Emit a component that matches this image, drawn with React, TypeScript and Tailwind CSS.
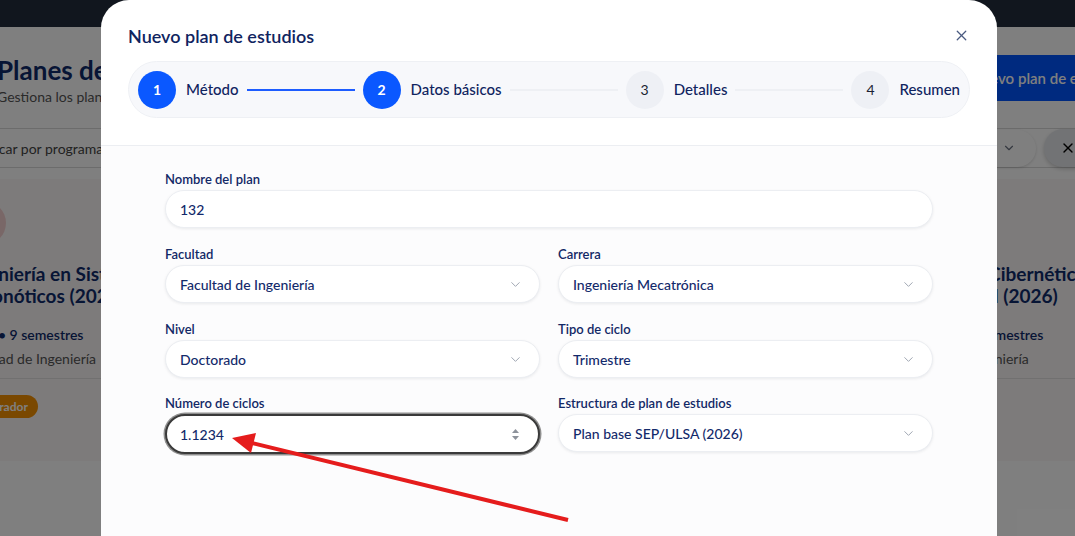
import React from "react";
import { ChevronDown, X } from "lucide-react";

const font = { fontFamily: "Lato, 'Noto Sans', sans-serif" };

function Field({ label, value, select, focused }: { label: string; value: string; select?: boolean; focused?: boolean }) {
  return (
    <div className="flex flex-col">
      <div className="h-[18px] text-[13px] font-semibold leading-[18px] text-[#122866]">{label}</div>
      <div
        className={
          focused
            ? "mt-[2px] flex h-[40px] items-center justify-between rounded-full border-2 border-[#3a3a3a] bg-white pl-[13px] pr-[18px] shadow-[0_0_0_1.5px_#8f8f8f]"
            : "mt-[2px] flex h-[38px] items-center justify-between rounded-full border border-[#eceef2] bg-white pl-[14px] pr-[16px] shadow-[0_1px_3px_rgba(15,23,42,0.08)]"
        }
      >
        <span className="text-[14px] font-medium text-[#132a6b]">{value}</span>
        {select && <ChevronDown size={15} strokeWidth={1.5} className="text-[#9aa1ad]" />}
        {focused && (
          <svg width="9" height="13" viewBox="0 0 9 13">
            <path d="M4.5 1 L8 5 L1 5 Z" fill="#8d929b" />
            <path d="M4.5 12 L8 8 L1 8 Z" fill="#8d929b" />
          </svg>
        )}
      </div>
    </div>
  );
}

function Step({ n, label, active }: { n: number; label: string; active?: boolean }) {
  return (
    <div className="flex shrink-0 items-center gap-[10px]">
      <div
        className={
          active
            ? "flex h-[38px] w-[38px] items-center justify-center rounded-full bg-[#0a58ff] text-[14px] font-bold text-white"
            : "flex h-[38px] w-[38px] items-center justify-center rounded-full bg-[#eef0f5] text-[14px] text-[#1b1f33]"
        }
      >
        {n}
      </div>
      <span className="text-[15px] font-medium text-[#10245f]">{label}</span>
    </div>
  );
}

function Line({ active }: { active?: boolean }) {
  return <div className={active ? "mx-2 h-[2px] flex-1 bg-[#1d5cff]" : "mx-2 h-[2px] flex-1 bg-[#eef0f4]"} />;
}

function BgCard({ lines, badge }: { lines: string[]; badge?: string }) {
  return (
    <div className="h-[282px] rounded-[16px] bg-[#fbf7f7] px-6 pt-[22px]">
      <div className="h-[44px] w-[44px] rounded-full bg-[#f3cfcf]" />
      <div className="mt-[18px] text-[19px] font-bold leading-[22px] text-[#0f2a6b]">
        <div>{lines[0]}</div>
        <div>{lines[1]}</div>
      </div>
      <div className="mt-[18px] text-[14px] font-semibold leading-[20px] text-[#0f2a6b]">{lines[2]}</div>
      <div className="mt-[4px] text-[14px] leading-[20px] text-[#555]">{lines[3]}</div>
      <div className="mt-[9px] h-px bg-[#e3e0e0]" />
      {badge && (
        <div className="mt-[16px] flex pl-[8px]">
          <div className="flex h-[23px] items-center rounded-full bg-[#f59000] pl-[10px] pr-[10px] text-[12px] font-bold text-white">
            {badge}
          </div>
        </div>
      )}
    </div>
  );
}

export default function App() {
  return (
    <div className="relative h-[536px] w-[1075px] overflow-hidden bg-white" style={font}>
      {/* background page */}
      <div className="h-[27px] bg-[#222c3c]" />
      <div className="ml-[-64px] w-[1260px]">
        <div className="flex items-start justify-between pr-[44px] pt-[28px]">
          <div className="ml-[61px]">
            <div className="text-[26px] font-bold leading-[30px] text-[#0f2a6b]">Planes de estudio</div>
            <div className="mt-[1px] text-[14px] text-[#555]">Gestiona los planes de estudio</div>
          </div>
          <div className="flex h-[46px] w-[210px] items-center rounded-[10px] bg-[#0054ff] px-4 text-[15px] font-semibold text-white">
            + Nuevo plan de estudios
          </div>
        </div>
        <div className="mt-[21px] flex items-center gap-2 border-y border-[#d8d8d8]">
          <div className="flex h-[38px] w-[900px] items-center pl-[40px] text-[14px] text-[#444]">Buscar por programa...</div>
          <div className="ml-[92px] flex h-[37px] w-[100px] items-center justify-end rounded-full bg-white pr-[20px] shadow-[0_1px_3px_rgba(0,0,0,0.15)]">
            <ChevronDown size={14} className="text-[#6b7280]" />
          </div>
          <div className="flex h-[38px] w-[60px] items-center rounded-full bg-[#e5e7eb] pl-[16px] shadow-[0_2px_4px_rgba(0,0,0,0.2)]">
            <X size={16} className="text-black" />
          </div>
        </div>
        <div className="mt-[11px] grid grid-cols-[448px_448px_448px] gap-6">
          <div className="ml-[2px]">
            <BgCard
              lines={["Ingeniería en Sistemas", "Agronóticos (2026)", "2026 • 9 semestres", "Facultad de Ingeniería"]}
              badge="Borrador"
            />
          </div>
          <BgCard lines={["Ingeniería Industrial", "y de Sistemas (2026)", "2026 • 9 semestres", "Facultad de Ingeniería"]} />
          <div className="ml-[-4px]">
            <BgCard lines={["Ingeniería Cibernética", "y Seguridad (2026)", "Maestría • 9 semestres", "Escuela de Ingeniería"]} />
          </div>
        </div>
      </div>
      {/* overlay */}
      <div className="absolute inset-0 bg-black/50" />

      {/* modal */}
      <div className="absolute left-[101px] top-0 h-[620px] w-[896px] overflow-hidden rounded-t-[28px] bg-white">
        <div className="border-b border-[#eceef2] px-[27px] pb-[27px] pt-[22px]">
          <div className="flex items-center justify-between">
            <div className="text-[18px] font-semibold leading-[28px] text-[#10245f]">Nuevo plan de estudios</div>
            <X size={17} strokeWidth={1.8} className="-mt-[2px] text-[#4a5a80]" />
          </div>
          <div className="mt-[11px] flex h-[57px] items-center rounded-full border border-[#eef0f4] bg-[#f7f8fb] px-[9px]">
            <Step n={1} label="Método" active />
            <Line active />
            <Step n={2} label="Datos básicos" active />
            <Line />
            <Step n={3} label="Detalles" />
            <Line />
            <Step n={4} label="Resumen" />
          </div>
        </div>
        <div className="h-full bg-[#fcfcfd] px-[64px] pt-[24px]">
          <div className="grid grid-cols-2 gap-x-[18px] gap-y-[17px]">
            <div className="col-span-2">
              <Field label="Nombre del plan" value="132" />
            </div>
            <Field label="Facultad" value="Facultad de Ingeniería" select />
            <Field label="Carrera" value="Ingeniería Mecatrónica" select />
            <Field label="Nivel" value="Doctorado" select />
            <Field label="Tipo de ciclo" value="Trimestre" select />
            <div className="-mt-[1px]">
              <Field label="Número de ciclos" value="1.1234" focused />
            </div>
            <div className="-mt-[1px]">
              <Field label="Estructura de plan de estudios" value="Plan base SEP/ULSA (2026)" select />
            </div>
          </div>
        </div>
      </div>

      {/* red annotation arrow */}
      <svg className="pointer-events-none absolute left-0 top-0" width="1075" height="536" viewBox="0 0 1075 536">
        <line x1="568" y1="520" x2="250" y2="442.5" stroke="#e51c1c" strokeWidth="4" />
        <polygon points="232,438 256,433 251,453" fill="#e51c1c" />
      </svg>
    </div>
  );
}
